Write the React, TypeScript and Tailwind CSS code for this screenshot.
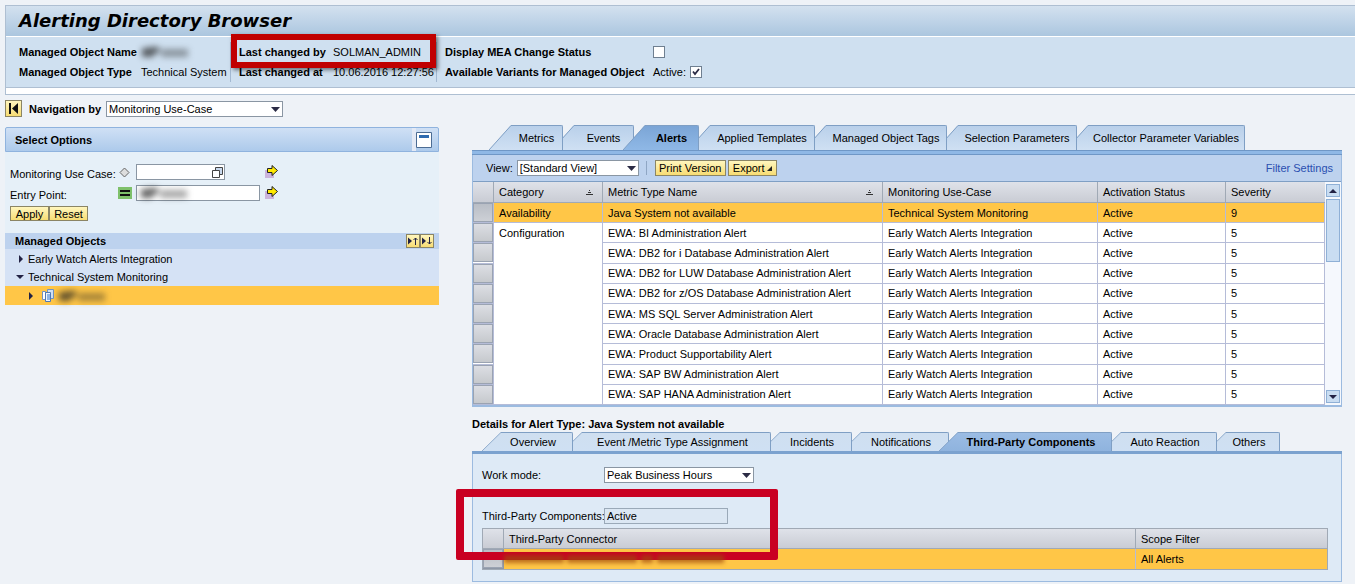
import { useState } from "react";
import type { ReactNode } from "react";

type Tab = { label: string; width: string };

const MAIN_TABS: Tab[] = [
  { label: "Metrics", width: "w-[74px]" },
  { label: "Events", width: "w-[82px]" },
  { label: "Alerts", width: "w-[76px]" },
  { label: "Applied Templates", width: "w-[127px]" },
  { label: "Managed Object Tags", width: "w-[143px]" },
  { label: "Selection Parameters", width: "w-[141px]" },
  { label: "Collector Parameter Variables", width: "w-[179px]" },
];

const DETAIL_TABS: Tab[] = [
  { label: "Overview", width: "w-[91px]" },
  { label: "Event /Metric Type Assignment", width: "w-[208px]" },
  { label: "Incidents", width: "w-[91px]" },
  { label: "Notifications", width: "w-[107px]" },
  { label: "Third-Party Components", width: "w-[173px]" },
  { label: "Auto Reaction", width: "w-[115px]" },
  { label: "Others", width: "w-[73px]" },
];

const CONFIG_ALERTS = [
  "EWA: BI Administration Alert",
  "EWA: DB2 for i Database Administration Alert",
  "EWA: DB2 for LUW Database Administration Alert",
  "EWA: DB2 for z/OS Database Administration Alert",
  "EWA: MS SQL Server Administration Alert",
  "EWA: Oracle Database Administration Alert",
  "EWA: Product Supportability Alert",
  "EWA: SAP BW Administration Alert",
  "EWA: SAP HANA Administration Alert",
];

const Z_ORDER = ["z-[7]", "z-[6]", "z-[5]", "z-[4]", "z-[3]", "z-[2]", "z-[1]"];

const YELLOW_BUTTON =
  "border border-[#8b8565] bg-gradient-to-b from-[#fff6bd] to-[#f7dc72] leading-3 whitespace-nowrap";

function Masked({ className = "" }: { className?: string }) {
  return (
    <svg className={`h-3 w-12 blur-[3px] ${className}`} viewBox="0 0 48 12" aria-label="Masked value">
      <path d="M1 2h7v9H1zM8 1h10v6h-5v4H8z" fill="#222" opacity=".7" />
      <path d="M20 3h27v8H20z" fill="#222" opacity=".4" />
    </svg>
  );
}

function Dropdown({ label, id, value, width }: { label: string; id: string; value: string; width: string }) {
  return (
    <div className={`relative ${width}`}>
      <select
        id={id}
        aria-label={label}
        defaultValue={value}
        className="block h-4 w-full appearance-none border border-[#8a96a3] bg-white pl-[2px] text-[11px] leading-[14px]"
      >
        <option>{value}</option>
      </select>
      <svg className="pointer-events-none absolute top-[6px] right-[3px]" width="9" height="5" viewBox="0 0 9 5">
        <path d="M0 0h9L4.5 5z" fill="#2b2b45" />
      </svg>
    </div>
  );
}

function Tabs({
  tabs,
  active,
  onSelect,
  tall,
  label,
}: {
  tabs: Tab[];
  active: string;
  onSelect: (t: string) => void;
  tall?: boolean;
  label: string;
}) {
  return (
    <div role="tablist" aria-label={label} className={`flex ${tall ? "h-[25px] pl-[17px]" : "h-[19px] pl-[10px]"}`}>
      {tabs.map((tab, i) => {
        const on = tab.label === active;
        const fill = on ? (tall ? "#8fb8e6" : "#8fb3de") : "#cfe0f3";
        const top = on ? (tall ? "#7ba5d6" : "#9bbce4") : tall ? "#b9d0ea" : "#cfdff0";
        const gradId = `${tall ? "m" : "d"}${i}`;
        return (
          <button
            key={tab.label}
            role="tab"
            aria-selected={on}
            onClick={() => onSelect(tab.label)}
            className={`relative flex shrink-0 ${tab.width} ${i > 0 ? (tall ? "-ml-[11px]" : "-ml-[10px]") : ""} ${on ? "z-10 font-bold" : Z_ORDER[i]}`}
          >
            <svg className="h-full shrink-0" width={tall ? 22 : 19} viewBox="0 0 22 25" preserveAspectRatio="none">
              <defs>
                <linearGradient id={gradId} x1="0" y1="0" x2="0" y2="1">
                  <stop offset="0" stopColor={top} />
                  <stop offset="1" stopColor={fill} />
                </linearGradient>
              </defs>
              <path d="M0 25L22 0V25z" fill={`url(#${gradId})`} />
              <path d="M0 25L22 .5" fill="none" stroke="#7f9fc4" />
            </svg>
            <span
              className={`flex h-full flex-1 items-center justify-center rounded-tr-[2px] border-t border-r border-[#7f9fc4] bg-gradient-to-b whitespace-nowrap ${
                tall ? "" : "pr-[7px]"
              } ${
                on
                  ? tall
                    ? "from-[#7ba5d6] to-[#8fb8e6]"
                    : "from-[#9bbce4] to-[#8fb3de]"
                  : tall
                    ? "from-[#b9d0ea] to-[#cfe0f3]"
                    : "from-[#cfdff0] to-[#cfe0f3]"
              }`}
            >
              {tab.label}
            </span>
          </button>
        );
      })}
    </div>
  );
}

function Th({ children, sorted }: { children?: ReactNode; sorted?: boolean }) {
  return (
    <th
      scope="col"
      className="border-r border-b border-[#a0a9b5] bg-gradient-to-b from-[#dfe2e9] to-[#c9ccd4] px-[5px] py-0 text-left font-normal last:border-r-0"
    >
      <span className="flex items-center justify-between pr-1">
        {children}
        {sorted && (
          <svg width="7" height="5" viewBox="0 0 7 5" aria-label="Sorted ascending">
            <path d="M3 0h1v1H3zM2 2h3v1H2zM0 4h7v1H0z" fill="#333" />
          </svg>
        )}
      </span>
    </th>
  );
}

function RowMarker({ label, pressed }: { label: string; pressed?: boolean }) {
  return (
    <td className="border-r border-b border-[#8e97a6] p-0">
      <button
        aria-label={label}
        className={`block h-[19px] w-full border border-[#9aa3b2] bg-gradient-to-b ${
          pressed ? "from-[#b9bec6] to-[#cdd0d6]" : "from-[#dcdee4] to-[#c6c9cd]"
        }`}
      />
    </td>
  );
}

function ArrowIcon() {
  return (
    <svg width="14" height="14" viewBox="0 0 14 14">
      <path d="M0 5h9v8H0z" fill="#cbb4dc" />
      <path d="M2.500 3.500h4.500v-3l5.500 5-5.500 5v-3h-4.500z" fill="#ffe900" stroke="#222" />
    </svg>
  );
}

function PageHeader() {
  return (
    <header className="ml-[5px] border-y border-l border-[#aebfd2] bg-white pb-[6px]">
      <h1 className="flex h-[31px] items-center border-b border-white bg-gradient-to-b from-[#d3e1ef] to-[#abc6df] pl-[13px] font-['DejaVu_Sans'] text-[18px] font-bold italic">
        Alerting Directory Browser
      </h1>
      <div className="flex h-[51px] border-b border-[#aebfd2] bg-[#cfe0f0] pt-[5px]">
        <dl className="grid h-10 w-[212px] shrink-0 grid-cols-[122px_1fr] pl-[13px] leading-5">
          <dt className="font-bold">Managed Object Name</dt>
          <dd className="flex items-center">
            <Masked />
          </dd>
          <dt className="font-bold">Managed Object Type</dt>
          <dd className="whitespace-nowrap">Technical System</dd>
        </dl>
        <dl className="relative ml-3 grid h-10 w-[207px] shrink-0 grid-cols-[94px_1fr] border-x border-[#a3b9d2] pl-2 leading-5">
          <dt className="font-bold whitespace-nowrap">Last changed by</dt>
          <dd>SOLMAN_ADMIN</dd>
          <dt className="font-bold whitespace-nowrap">Last changed at</dt>
          <dd className="whitespace-nowrap">10.06.2016 12:27:56</dd>
          <div className="absolute -top-2 left-0 z-20 h-[34px] w-[205px] border-[6px] border-[#c00000] shadow-[2px_2px_4px_rgba(0,0,0,0.5)]" />
        </dl>
        <div className="grid h-10 grid-cols-[204px_auto] gap-x-1 pl-2 leading-5">
          <label htmlFor="mea" className="font-bold whitespace-nowrap">
            Display MEA Change Status
          </label>
          <Check id="mea" />
          <span className="font-bold whitespace-nowrap">Available Variants for Managed Object</span>
          <span className="flex items-center gap-1">
            <label htmlFor="variants">Active:</label>
            <Check id="variants" checked />
          </span>
        </div>
      </div>
    </header>
  );
}

function Check({ id, checked = false }: { id: string; checked?: boolean }) {
  return (
    <span className="relative flex items-center">
      <input
        id={id}
        type="checkbox"
        defaultChecked={checked}
        className="peer size-3 appearance-none border border-[#6f7f90] bg-white"
      />
      <svg
        className="pointer-events-none invisible absolute left-[2px] peer-checked:visible"
        width="8"
        height="8"
        viewBox="0 0 8 8"
      >
        <path d="M1 3.500L3 6L7 1" fill="none" stroke="#2b2b45" strokeWidth="1.800" />
      </svg>
    </span>
  );
}

function SelectOptions() {
  return (
    <section className="mt-[10px]">
      <div className="flex h-[25px] items-center justify-between rounded-t-[2px] border border-[#8fb3de] bg-gradient-to-b from-[#cfe0f5] to-[#adcaeb] pr-[6px] pl-[9px]">
        <h2 className="font-bold">Select Options</h2>
        <button aria-label="Collapse" className="flex h-[23px] items-center border-l-4 border-[#e3e9f5]">
          <svg width="16" height="16" viewBox="0 0 16 16">
            <path d="M.5.5h15v15H.5z" fill="#fff" stroke="#4c6c94" />
            <path d="M3 3h10v3H3z" fill="#2f6bb0" />
          </svg>
        </button>
      </div>
      <form className="h-[81px] bg-[#e6f0f8] pt-3 pl-[5px]" onSubmit={(e) => e.preventDefault()}>
        <div className="grid grid-cols-[107px_19px_129px_14px] items-center gap-y-[5px] [&>label]:h-4 [&>label]:leading-5">
          <label htmlFor="useCase">Monitoring Use Case:</label>
          <svg className="ml-[2px]" width="11" height="11" viewBox="0 0 11 11">
            <path d="M5.500 1l4.500 4.500-4.500 4.500L1 5.500z" fill="#ddd" stroke="#666" />
          </svg>
          <span className="relative w-[89px]">
            <input id="useCase" className="block h-4 w-full border border-[#8a96a3] bg-white px-[2px]" />
            <svg className="absolute top-[3px] right-[2px]" width="11" height="11" viewBox="0 0 11 11">
              <path d="M3.500.5h7v7h-7z" fill="#c9d9ee" stroke="#444" />
              <path d="M.5 3.500h7v7h-7z" fill="#fff" stroke="#444" />
            </svg>
          </span>
          <ArrowIcon />
          <label htmlFor="entryPoint">Entry Point:</label>
          <svg className="ml-px" width="14" height="12" viewBox="0 0 14 12">
            <path d="M0 0h14v12H0z" fill="#7ec06a" />
            <path d="M2 3h10v2H2zM2 7h10v2H2z" fill="#111" />
          </svg>
          <span className="relative w-[124px]">
            <input id="entryPoint" className="block h-4 w-full border border-[#8a96a3] bg-white px-[2px]" />
            <Masked className="absolute top-[2px] left-1" />
          </span>
          <ArrowIcon />
        </div>
        <div className="mt-[5px] flex">
          <button className={`${YELLOW_BUTTON} h-[15px] w-[39px]`}>Apply</button>
          <button className={`${YELLOW_BUTTON} h-[15px] w-[39px]`}>Reset</button>
        </div>
      </form>
      <div className="flex h-4 items-center justify-between bg-[#bdd2ee] pr-[5px] pl-[10px]">
        <h2 className="font-bold">Managed Objects</h2>
        <div className="flex">
          <button aria-label="Collapse all" className={`${YELLOW_BUTTON} flex size-[14px] items-center`}>
            <svg width="12" height="10" viewBox="0 0 12 10">
              <path d="M1 1.500v7L5 5z" fill="#222244" />
              <path d="M8.500 9V2M6.500 4l2-2 2 2" fill="none" stroke="#222244" />
            </svg>
          </button>
          <button aria-label="Expand all" className={`${YELLOW_BUTTON} flex size-[14px] items-center`}>
            <svg width="12" height="10" viewBox="0 0 12 10">
              <path d="M1 1.500v7L5 5z" fill="#222244" />
              <path d="M8.500 1v7M6.500 6l2 2 2-2" fill="none" stroke="#222244" />
            </svg>
          </button>
        </div>
      </div>
      <ul role="tree" className="bg-[#d5e2f5] pt-px">
        <li role="treeitem" aria-expanded="false" className="flex h-[18px] items-center gap-[5px] pl-[14px]">
          <svg width="4" height="8" viewBox="0 0 4 8">
            <path d="M0 0l4 4-4 4z" fill="#222244" />
          </svg>
          Early Watch Alerts Integration
        </li>
        <li role="treeitem" aria-expanded="true" className="flex h-[18px] items-center gap-1 pl-[11px]">
          <svg width="8" height="4" viewBox="0 0 8 4">
            <path d="M0 0h8L4 4z" fill="#222244" />
          </svg>
          Technical System Monitoring
        </li>
        <li role="treeitem" aria-selected="true" className="flex h-[19px] items-center bg-[#ffc647] pl-6">
          <svg width="4" height="8" viewBox="0 0 4 8">
            <path d="M0 0l4 4-4 4z" fill="#222244" />
          </svg>
          <svg className="mr-1 ml-[9px]" width="12" height="13" viewBox="0 0 12 13">
            <path d="M.5 2.500h3v8h-3z" fill="#fff" stroke="#6f93c4" />
            <path d="M5.500.5h6v9h-6z" fill="#cfe0f5" stroke="#6f93c4" />
            <path d="M3.500 3.500h5v9h-5z" fill="#eef5fd" stroke="#4f79b4" />
            <path d="M5 5h3v6H5z" fill="#8fb5e6" />
          </svg>
          <Masked />
        </li>
      </ul>
    </section>
  );
}

function AlertTable() {
  return (
    <div className="border-x border-b-2 border-[#9cbbe0]">
      <div className="flex h-[27px] items-center border-b border-[#7f9fc4] bg-[#bdd2ee] pr-2 pl-[13px]">
        <label htmlFor="view" className="mr-1">
          View:
        </label>
        <Dropdown id="view" label="View" value="[Standard View]" width="w-[122px]" />
        <div className="mr-2 ml-[7px] h-[14px] w-px bg-[#8fa6c4]" />
        <button className={`${YELLOW_BUTTON} h-4 w-[71px]`}>Print Version</button>
        <button className={`${YELLOW_BUTTON} ml-[2px] flex h-4 w-[49px] items-center justify-center gap-[2px]`}>
          Export
          <svg width="5" height="5" viewBox="0 0 5 5">
            <path d="M5 0v5H0z" fill="#222" />
          </svg>
        </button>
        <a href="#filter" className="ml-auto text-[#2a4fb0]">
          Filter Settings
        </a>
      </div>
      <div className="flex">
        <table className="h-[223px] flex-1 table-fixed border-separate border-spacing-0 bg-white">
          <colgroup>
            <col className="w-[21px]" />
            <col className="w-[109px]" />
            <col />
            <col className="w-[215px]" />
            <col className="w-[128px]" />
            <col className="w-[99px]" />
          </colgroup>
          <thead>
            <tr className="h-[21px]">
              <Th />
              <Th sorted>Category</Th>
              <Th sorted>Metric Type Name</Th>
              <Th>Monitoring Use-Case</Th>
              <Th>Activation Status</Th>
              <Th>Severity</Th>
            </tr>
          </thead>
          <tbody className="[&_td]:border-[#b5bcd8]">
            <tr className="bg-[#ffc647] [&>td+td]:border-r [&>td+td]:border-b [&>td+td]:px-[5px] [&>td+td]:py-0">
              <RowMarker label="Row 1" pressed />
              <td>Availability</td>
              <td>Java System not available</td>
              <td>Technical System Monitoring</td>
              <td>Active</td>
              <td>9</td>
            </tr>
            {CONFIG_ALERTS.map((name, i) => (
              <tr key={name} className="[&>td+td]:border-r [&>td+td]:border-b [&>td+td]:px-[5px]">
                <RowMarker label={`Row ${i + 2}`} />
                {i === 0 && (
                  <td rowSpan={CONFIG_ALERTS.length} className="pt-[2px] align-top">
                    Configuration
                  </td>
                )}
                <td>{name}</td>
                <td>Early Watch Alerts Integration</td>
                <td>Active</td>
                <td>5</td>
              </tr>
            ))}
          </tbody>
        </table>
        <div className="flex w-4 shrink-0 flex-col items-center bg-[#f5f8fd] py-[2px]">
          <button
            aria-label="Scroll up"
            className="flex h-[13px] w-[14px] items-center justify-center border border-[#8fb0d6] bg-[#c9ddf2]"
          >
            <svg width="8" height="4" viewBox="0 0 8 4">
              <path d="M0 4h8L4 0z" fill="#222244" />
            </svg>
          </button>
          <div className="mt-[2px] h-[63px] w-[14px] border border-[#8fb0d6] bg-[#c9ddf2]" />
          <button
            aria-label="Scroll down"
            className="mt-auto flex h-[13px] w-[14px] items-center justify-center border border-[#8fb0d6] bg-[#c9ddf2]"
          >
            <svg width="8" height="4" viewBox="0 0 8 4">
              <path d="M0 0h8L4 4z" fill="#222244" />
            </svg>
          </button>
        </div>
      </div>
    </div>
  );
}

function AlertDetails() {
  return (
    <div className="relative border-x border-b border-[#9cbbe0] bg-[#deeaf6] px-[9px] pt-[13px] pb-[11px]">
      <div className="grid grid-cols-[122px_1fr] items-center gap-y-[25px]">
        <label htmlFor="workMode">Work mode:</label>
        <Dropdown id="workMode" label="Work mode" value="Peak Business Hours" width="w-[150px]" />
        <label htmlFor="thirdParty" className="whitespace-nowrap">
          Third-Party Components:
        </label>
        <input
          id="thirdParty"
          readOnly
          value="Active"
          className="h-4 w-[124px] border border-[#9aa9b8] bg-[#dbe7f3] px-[2px]"
        />
      </div>
      <div className="mt-1 pr-1">
        <table className="w-full table-fixed border-separate border-spacing-0 border border-[#a0a9b5]">
          <colgroup>
            <col className="w-[21px]" />
            <col />
            <col className="w-[191px]" />
          </colgroup>
          <thead>
            <tr className="h-5">
              <Th />
              <Th>Third-Party Connector</Th>
              <Th>Scope Filter</Th>
            </tr>
          </thead>
          <tbody>
            <tr className="h-5 bg-[#ffc647]">
              <RowMarker label="Connector 1" pressed />
              <td className="border-r border-[#b5bcd8] p-0">
                <svg className="relative z-30 h-3 w-56 blur-[2px]" viewBox="0 0 224 12" aria-label="Masked value">
                  <path d="M0 2h60v8H0zM63 2h70v8H63zM137 2h12v8h-12zM153 2h67v8h-67z" fill="#a0480c" opacity=".7" />
                </svg>
              </td>
              <td className="px-[5px] py-0">All Alerts</td>
            </tr>
          </tbody>
        </table>
      </div>
      <div className="absolute top-[35px] -left-[17px] z-20 h-[71px] w-[322px] rounded-[2px] border-8 border-[#c90022]" />
    </div>
  );
}

export default function App() {
  const [mainTab, setMainTab] = useState("Alerts");
  const [detailTab, setDetailTab] = useState("Third-Party Components");

  return (
    <div className="min-h-screen bg-[#eef2f7] pt-[5px] font-['Liberation_Sans',Arial,sans-serif] text-[11px] leading-4 text-black">
      <PageHeader />
      <div className="flex items-start pr-[13px] pl-[5px]">
        <aside className="mt-[5px] w-[434px] shrink-0">
          <div className="flex h-[17px] items-center">
            <button aria-label="Hide navigation" className={`${YELLOW_BUTTON} flex size-[17px] items-center justify-center`}>
              <svg width="11" height="11" viewBox="0 0 11 11">
                <path d="M1 0h2v11H1zM10 0v11L4 5.500z" fill="#111" />
              </svg>
            </button>
            <label htmlFor="nav" className="ml-[7px] w-[77px] font-bold">
              Navigation by
            </label>
            <Dropdown id="nav" label="Navigation by" value="Monitoring Use-Case" width="w-[177px]" />
          </div>
          <SelectOptions />
        </aside>

        <main className="mt-[30px] ml-[33px] min-w-0 flex-1">
          <Tabs tabs={MAIN_TABS} active={mainTab} onSelect={setMainTab} tall label="Directory" />
          <div className="h-[5px] border-y border-[#6f97c6] bg-[#8fb8e6]" />
          <AlertTable />
          <h2 className="mt-[9px] font-bold">Details for Alert Type: Java System not available</h2>
          <Tabs tabs={DETAIL_TABS} active={detailTab} onSelect={setDetailTab} label="Alert details" />
          <div className="h-[3px] bg-[#7ba2cf]" />
          <AlertDetails />
        </main>
      </div>
    </div>
  );
}
